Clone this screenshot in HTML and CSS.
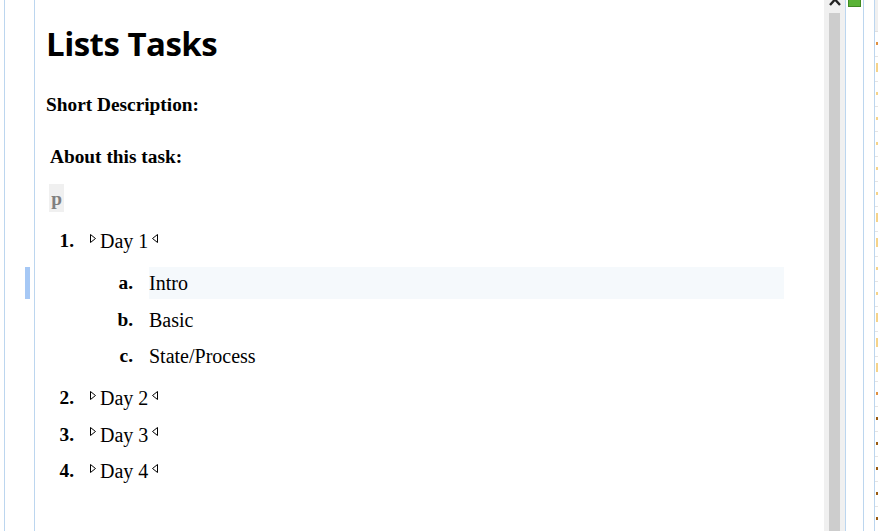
FILE: index.html
```html
<!DOCTYPE html>
<html>
<head>
<meta charset="utf-8">
<link rel="stylesheet" href="styles.css">
</head>
<body>
<div class="frame">
  <div class="gutter"><div class="gline"></div></div>
  <div class="editor">
    <h1 class="title">Lists Tasks</h1>
    <div class="shortdesc">Short Description:</div>
    <div class="about">About this task:</div>
    <div class="ptag">p</div>
    <ol class="steps">
      <li class="step">
        <div class="row">
          <span class="num">1.</span>
          <span class="txt"><svg class="tri" width="6" height="9" viewBox="0 0 6 9"><path d="M0.5 0.5 L5.5 4.5 L0.5 8.5 Z" fill="none" stroke="#000" stroke-width="1"/></svg>Day 1<svg class="tri tri-r" width="6" height="9" viewBox="0 0 6 9"><path d="M5.5 0.5 L0.5 4.5 L5.5 8.5 Z" fill="none" stroke="#000" stroke-width="1"/></svg></span>
        </div>
        <ol class="sub">
          <li class="row current"><span class="change"></span><span class="num">a.</span><span class="txt hl">Intro</span></li>
          <li class="row"><span class="num">b.</span><span class="txt">Basic</span></li>
          <li class="row"><span class="num">c.</span><span class="txt">State/Process</span></li>
        </ol>
      </li>
      <li class="step">
        <div class="row">
          <span class="num">2.</span>
          <span class="txt"><svg class="tri" width="6" height="9" viewBox="0 0 6 9"><path d="M0.5 0.5 L5.5 4.5 L0.5 8.5 Z" fill="none" stroke="#000" stroke-width="1"/></svg>Day 2<svg class="tri tri-r" width="6" height="9" viewBox="0 0 6 9"><path d="M5.5 0.5 L0.5 4.5 L5.5 8.5 Z" fill="none" stroke="#000" stroke-width="1"/></svg></span>
        </div>
      </li>
      <li class="step">
        <div class="row">
          <span class="num">3.</span>
          <span class="txt"><svg class="tri" width="6" height="9" viewBox="0 0 6 9"><path d="M0.5 0.5 L5.5 4.5 L0.5 8.5 Z" fill="none" stroke="#000" stroke-width="1"/></svg>Day 3<svg class="tri tri-r" width="6" height="9" viewBox="0 0 6 9"><path d="M5.5 0.5 L0.5 4.5 L5.5 8.5 Z" fill="none" stroke="#000" stroke-width="1"/></svg></span>
        </div>
      </li>
      <li class="step">
        <div class="row">
          <span class="num">4.</span>
          <span class="txt"><svg class="tri" width="6" height="9" viewBox="0 0 6 9"><path d="M0.5 0.5 L5.5 4.5 L0.5 8.5 Z" fill="none" stroke="#000" stroke-width="1"/></svg>Day 4<svg class="tri tri-r" width="6" height="9" viewBox="0 0 6 9"><path d="M5.5 0.5 L0.5 4.5 L5.5 8.5 Z" fill="none" stroke="#000" stroke-width="1"/></svg></span>
        </div>
      </li>
    </ol>
  </div>
  <div class="scrollbar">
    <svg class="arrow" width="12" height="8" viewBox="0 0 12 8"><path d="M1 7 L6 1.5 L11 7" fill="none" stroke="#222" stroke-width="2.4"/></svg>
    <div class="thumb"></div>
  </div>
  <div class="strip"><div class="green"></div></div>
  <div class="strip2"></div>
  <div class="panel">
    <div class="phead"></div>
    <div class="pitem"><i class="mk o"></i></div>
    <div class="pitem"><i class="mk y tall"></i></div>
    <div class="pitem"><i class="mk y"></i></div>
    <div class="pitem"><i class="mk y"></i></div>
    <div class="pitem"><i class="mk y"></i></div>
    <div class="pitem"><i class="mk y"></i></div>
    <div class="pitem"><i class="mk y"></i></div>
    <div class="pitem"><i class="mk y tall"></i></div>
    <div class="pitem"><i class="mk y tall"></i></div>
    <div class="pitem"><i class="mk y"></i></div>
    <div class="pitem"><i class="mk y"></i></div>
    <div class="pitem"><i class="mk y tall"></i></div>
    <div class="pitem"><i class="mk y tall"></i></div>
    <div class="pitem"><i class="mk y tall"></i></div>
    <div class="pitem"><i class="mk o"></i></div>
    <div class="pitem"><i class="mk d"></i></div>
    <div class="pitem"><i class="mk d"></i></div>
    <div class="pitem"><i class="mk d"></i></div>
    <div class="pitem"><i class="mk d"></i></div>
    <div class="pitem"><i class="mk d"></i></div>
  </div>
</div>
</body>
</html>
```

FILE: styles.css
```css
html, body {
  margin: 0;
  padding: 0;
  background: #fff;
  overflow: hidden;
}
.frame {
  display: flex;
  width: 878px;
  height: 531px;
  overflow: hidden;
}
.gutter {
  width: 30px;
  flex: none;
  padding-left: 4px;
  border-right: 1px solid #bcd6ef;
}
.gline {
  width: 1px;
  height: 100%;
  background: #bcd6ef;
}
.editor {
  flex: none;
  width: 789px;
  box-sizing: border-box;
  padding: 0 40px 0 11px;
  font-family: "Liberation Serif", "Times New Roman", serif;
  color: #000;
}
.title {
  font-family: "Open Sans", "Noto Sans", sans-serif;
  font-weight: 700;
  font-size: 33px;
  line-height: 40px;
  margin: 24px 0 0 0;
  letter-spacing: -0.5px;
}
.shortdesc {
  font-weight: 700;
  font-size: 19.33px;
  line-height: 24px;
  margin-top: 29px;
}
.about {
  font-weight: 700;
  font-size: 19.33px;
  line-height: 24px;
  margin-top: 28px;
  padding-left: 4px;
}
.ptag {
  display: inline-block;
  margin: 15px 0 0 3px;
  width: 15px;
  height: 28px;
  line-height: 30px;
  text-align: center;
  background: #f0f0f0;
  color: #808080;
  font-weight: 700;
  font-size: 19.33px;
}
.steps {
  list-style: none;
  margin: 13px 0 0 0;
  padding: 0;
  display: flex;
  flex-direction: column;
  gap: 4.7px;
}
.row {
  display: flex;
  align-items: center;
  height: 32px;
  line-height: 32px;
  position: relative;
}
.num {
  width: 28px;
  flex: none;
  text-align: right;
  font-weight: 700;
  font-size: 19.33px;
  margin-right: 16px;
}
.txt {
  flex: 1;
  font-size: 20px;
  height: 32px;
  display: flex;
  align-items: center;
}
.tri {
  flex: none;
  margin: -6px 4px 0 0;
}
.tri-r {
  margin: -6px 0 0 4px;
}
.sub {
  list-style: none;
  margin: 10px 0 5px 59px;
  padding: 0;
  display: flex;
  flex-direction: column;
  gap: 4.7px;
}
.hl {
  background: #f5f9fc;
}
.change {
  position: absolute;
  left: -80px;
  top: 0;
  width: 5px;
  height: 32px;
  background: #a6c8f5;
}
.scrollbar {
  width: 21px;
  flex: none;
  background: #f0f0f0;
  position: relative;
  border-right: 1px solid #bcd6ef;
}
.arrow {
  position: absolute;
  left: 5px;
  top: -2px;
}
.thumb {
  position: absolute;
  left: 5px;
  top: 13px;
  width: 11px;
  bottom: 0;
  background: #cdcdcd;
}
.strip {
  width: 17px;
  flex: none;
  border-right: 1px solid #bcd6ef;
  position: relative;
}
.green {
  position: absolute;
  left: 2px;
  top: -6px;
  width: 11px;
  height: 11px;
  background: #5ab336;
  border: 1px solid #3f8a22;
}
.strip2 {
  width: 10px;
  flex: none;
  border-right: 1px solid #bcd6ef;
}
.panel {
  flex: 1;
  background: #fff;
}
.phead {
  height: 31px;
  background: #f0f0f0;
  border-bottom: 1px solid #e0e0e0;
}
.pitem {
  height: 24px;
  border-bottom: 1px solid #e4e4e4;
  position: relative;
}
.mk {
  position: absolute;
  left: 1px;
  top: 10px;
  width: 2px;
  height: 3px;
}
.mk.o { background: #e09040; }
.mk.y { background: #f5d38a; }
.mk.tall { height: 9px; top: 6px; }
.mk.d { background: #9a5a10; }
```
